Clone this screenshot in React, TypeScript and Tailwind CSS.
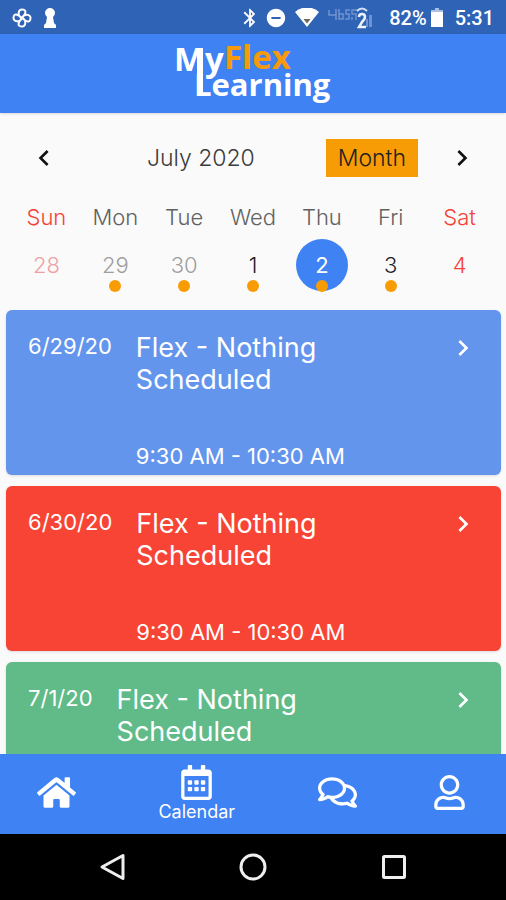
import React from "react";
import { FaHome, FaRegCalendarAlt, FaRegComments, FaRegUser } from "react-icons/fa";
import { MdBluetooth, MdDoNotDisturbOn, MdChevronLeft, MdChevronRight } from "react-icons/md";

const DAYS = [
  { name: "Sun", date: 28, nameColor: "text-[#f44336]", dateColor: "text-[#f0a0a4]", event: false },
  { name: "Mon", date: 29, nameColor: "text-[#616161]", dateColor: "text-[#9e9e9e]", event: true },
  { name: "Tue", date: 30, nameColor: "text-[#616161]", dateColor: "text-[#9e9e9e]", event: true },
  { name: "Wed", date: 1, nameColor: "text-[#616161]", dateColor: "text-[#212121]", event: true },
  { name: "Thu", date: 2, nameColor: "text-[#616161]", dateColor: "text-white", event: true, selected: true },
  { name: "Fri", date: 3, nameColor: "text-[#616161]", dateColor: "text-[#212121]", event: true },
  { name: "Sat", date: 4, nameColor: "text-[#f44336]", dateColor: "text-[#f44336]", event: false },
];

const EVENTS = [
  { date: "6/29/20", title: "Flex - Nothing Scheduled", time: "9:30 AM - 10:30 AM", bg: "bg-[#6495ed]" },
  { date: "6/30/20", title: "Flex - Nothing Scheduled", time: "9:30 AM - 10:30 AM", bg: "bg-[#f74435]" },
  { date: "7/1/20", title: "Flex - Nothing Scheduled", time: "", bg: "bg-[#60bb88]" },
];

const StatusBar: React.FC = () => (
  <div className="h-[34px] shrink-0 bg-[#2f63b6] text-white flex items-center justify-between px-3 pt-px font-[Roboto,sans-serif]">
    <div className="flex items-center gap-3">
      <svg width="20" height="20" viewBox="0 0 20 20" fill="none" stroke="currentColor" strokeWidth="2">
        <path d="M10 10C5 8 6 1 10.500 1.500s3.500 4 -.5 8.500zM10 10c2-5 9-4 8.500 .5s-4 3.500-8.500-.5zM10 10c5 2 4 9-.5 8.500s-3.500-4 .5-8.500zM10 10c-2 5-9 4-8.500-.5s4-3.500 8.500 .5z" />
      </svg>
      <svg width="12" height="20" viewBox="0 0 12 20" fill="currentColor">
        <path d="M6 0a5 5 0 0 1 5 5q0 2-2 4l1 6 2 2v3H0v-3l2-2 1-6Q1 7 1 5a5 5 0 0 1 5-5z" />
      </svg>
    </div>
    <div className="flex items-center">
      <MdBluetooth className="w-[22px] h-[22px]" />
      <MdDoNotDisturbOn className="w-[22px] h-[22px] ml-1" />
      <svg className="ml-2" width="24" height="19" viewBox="0 0 24 19">
        <path d="M0 4a18 18 0 0 1 24 0L12 19z" fill="currentColor" />
        <path d="M8.500 11h7L12 15.500z" fill="#6b6660" />
      </svg>
      <svg className="ml-2" width="46" height="22" viewBox="0 0 46 22" fill="none">
        <path d="M2 3v5h7M9 2v11M12 2v10h4V7h-4M23 3h-4v4h3v5h-4M30 3h-5v4h4v6M25 10v3" stroke="#6f93cf" strokeWidth="1.500" />
        <path d="M39 20v-8h2v8zM42 20V8h3v12z" fill="#6f93cf" />
        <path d="M30 4q5-5 10 0" stroke="#d5e1f5" strokeWidth="2" />
        <path d="M32 10q0-3 3-3t3 3q0 2-3 5l-3 5h7" stroke="#eef3fb" strokeWidth="2.500" />
      </svg>
      <span className="ml-4 text-xl leading-5 font-medium">82%</span>
      <svg className="ml-1" width="12" height="19" viewBox="0 0 12 19">
        <path d="M0 2h12v2H0zM4 0h4v2H4z" fill="#a9bfe3" />
        <path d="M0 4h12v15H0z" fill="currentColor" />
      </svg>
      <span className="ml-3 text-xl leading-5 font-medium">5:31</span>
    </div>
  </div>
);

const Logo: React.FC = () => (
  <svg width="164" height="79" viewBox="0 0 164 79" className="font-['Open_Sans',sans-serif] font-bold">
    <text x="3" y="37" fontSize="33" fill="#fff">
      My
    </text>
    <text x="53" y="35" fontSize="33" fill="#f79a0a">
      Flex
    </text>
    {/* right leg of the M runs down into the L */}
    <path d="M26 14h6v48h-6z" fill="#fff" />
    <text x="23" y="62" fontSize="31" fill="#fff">
      Learning
    </text>
  </svg>
);

const WeekCalendar: React.FC = () => (
  <section className="px-3 pt-[26px] pb-[19px]">
    <div className="flex items-center pl-4 pr-4">
      <button aria-label="Previous week" className="text-[#111]">
        <MdChevronLeft className="w-8 h-8" />
      </button>
      <h1 className="flex-1 pl-4 text-center text-[23px] text-[#3c3c3c]">July 2020</h1>
      <button className="h-[38px] px-3 mr-7 bg-[#f89c06] text-[23px] text-[#222]">Month</button>
      <button aria-label="Next week" className="text-[#111]">
        <MdChevronRight className="w-8 h-8" />
      </button>
    </div>

    <div className="grid grid-cols-7 mt-[26px] text-center text-[22px] leading-7">
      {DAYS.map((day) => (
        <div key={day.name} className="flex flex-col items-center">
          <span className={day.nameColor}>{day.name}</span>
          <button
            className={`relative mt-2 w-[52px] h-[52px] rounded-full ${day.dateColor} ${day.selected ? "bg-[#3e82f4] font-normal" : ""}`}
          >
            {day.date}
            {day.event && (
              <span className="absolute -bottom-px left-1/2 -translate-x-1/2 w-3 h-3 rounded-full bg-[#f89c06]" />
            )}
          </button>
        </div>
      ))}
    </div>
  </section>
);

const TabBar: React.FC = () => (
  <nav className="h-20 shrink-0 flex bg-[#3e82f4] text-white">
    <a href="#home" aria-label="Home" className="flex-2 flex items-center justify-center pb-1">
      <FaHome className="w-[39px] h-[35px]" />
    </a>
    <a href="#calendar" className="flex-3 flex flex-col items-center justify-center">
      <FaRegCalendarAlt className="w-[31px] h-[35px]" />
      <span className="text-lg leading-6 font-normal">Calendar</span>
    </a>
    <a href="#messages" aria-label="Messages" className="flex-2 flex items-center justify-center pb-1">
      <FaRegComments className="w-[39px] h-[35px]" />
    </a>
    <a href="#profile" aria-label="Profile" className="flex-2 flex items-center justify-center pb-1">
      <FaRegUser className="w-[31px] h-[35px]" />
    </a>
  </nav>
);

const SystemBar: React.FC = () => (
  <div className="h-[66px] shrink-0 bg-black flex items-center justify-center gap-[114px] text-[#eee]">
    <button aria-label="Back">
      <svg width="26" height="28" viewBox="0 0 26 28" fill="none" stroke="currentColor" strokeWidth="3">
        <path d="M24 2.500v23L3 14z" strokeLinejoin="round" />
      </svg>
    </button>
    <button aria-label="Home screen">
      <svg width="28" height="28" viewBox="0 0 28 28" fill="none" stroke="currentColor" strokeWidth="3">
        <circle cx="14" cy="14" r="12" />
      </svg>
    </button>
    <button aria-label="Recent apps">
      <svg width="26" height="26" viewBox="0 0 26 26" fill="none" stroke="currentColor" strokeWidth="3">
        <rect x="2.500" y="2.500" width="21" height="21" rx="1" />
      </svg>
    </button>
  </div>
);

export default function App() {
  return (
    <div className="h-screen flex flex-col bg-[#fafafa] font-light font-[Inter,sans-serif]">
      <StatusBar />
      <header className="h-[79px] shrink-0 bg-[#3e82f4] flex items-center justify-center shadow">
        <Logo />
      </header>

      <main className="flex-1 min-h-0 overflow-hidden">
        <WeekCalendar />
        <div className="flex flex-col gap-[11px] pl-1.5 pr-[5px]">
          {EVENTS.map((event) => (
            <article
              key={event.date}
              className={`h-[165px] rounded-md shadow-sm text-white font-normal flex items-start gap-6 px-[22px] pt-[22px] ${event.bg}`}
            >
              <span className="text-[22px] leading-7">{event.date}</span>
              <div className="flex-1">
                <h2 className="w-[220px] text-[27px] leading-8">{event.title}</h2>
                {event.time && <p className="mt-11 text-[22px] leading-8">{event.time}</p>}
              </div>
              <button aria-label="Open event">
                <MdChevronRight className="w-8 h-8" />
              </button>
            </article>
          ))}
        </div>
      </main>

      <TabBar />
      <SystemBar />
    </div>
  );
}
